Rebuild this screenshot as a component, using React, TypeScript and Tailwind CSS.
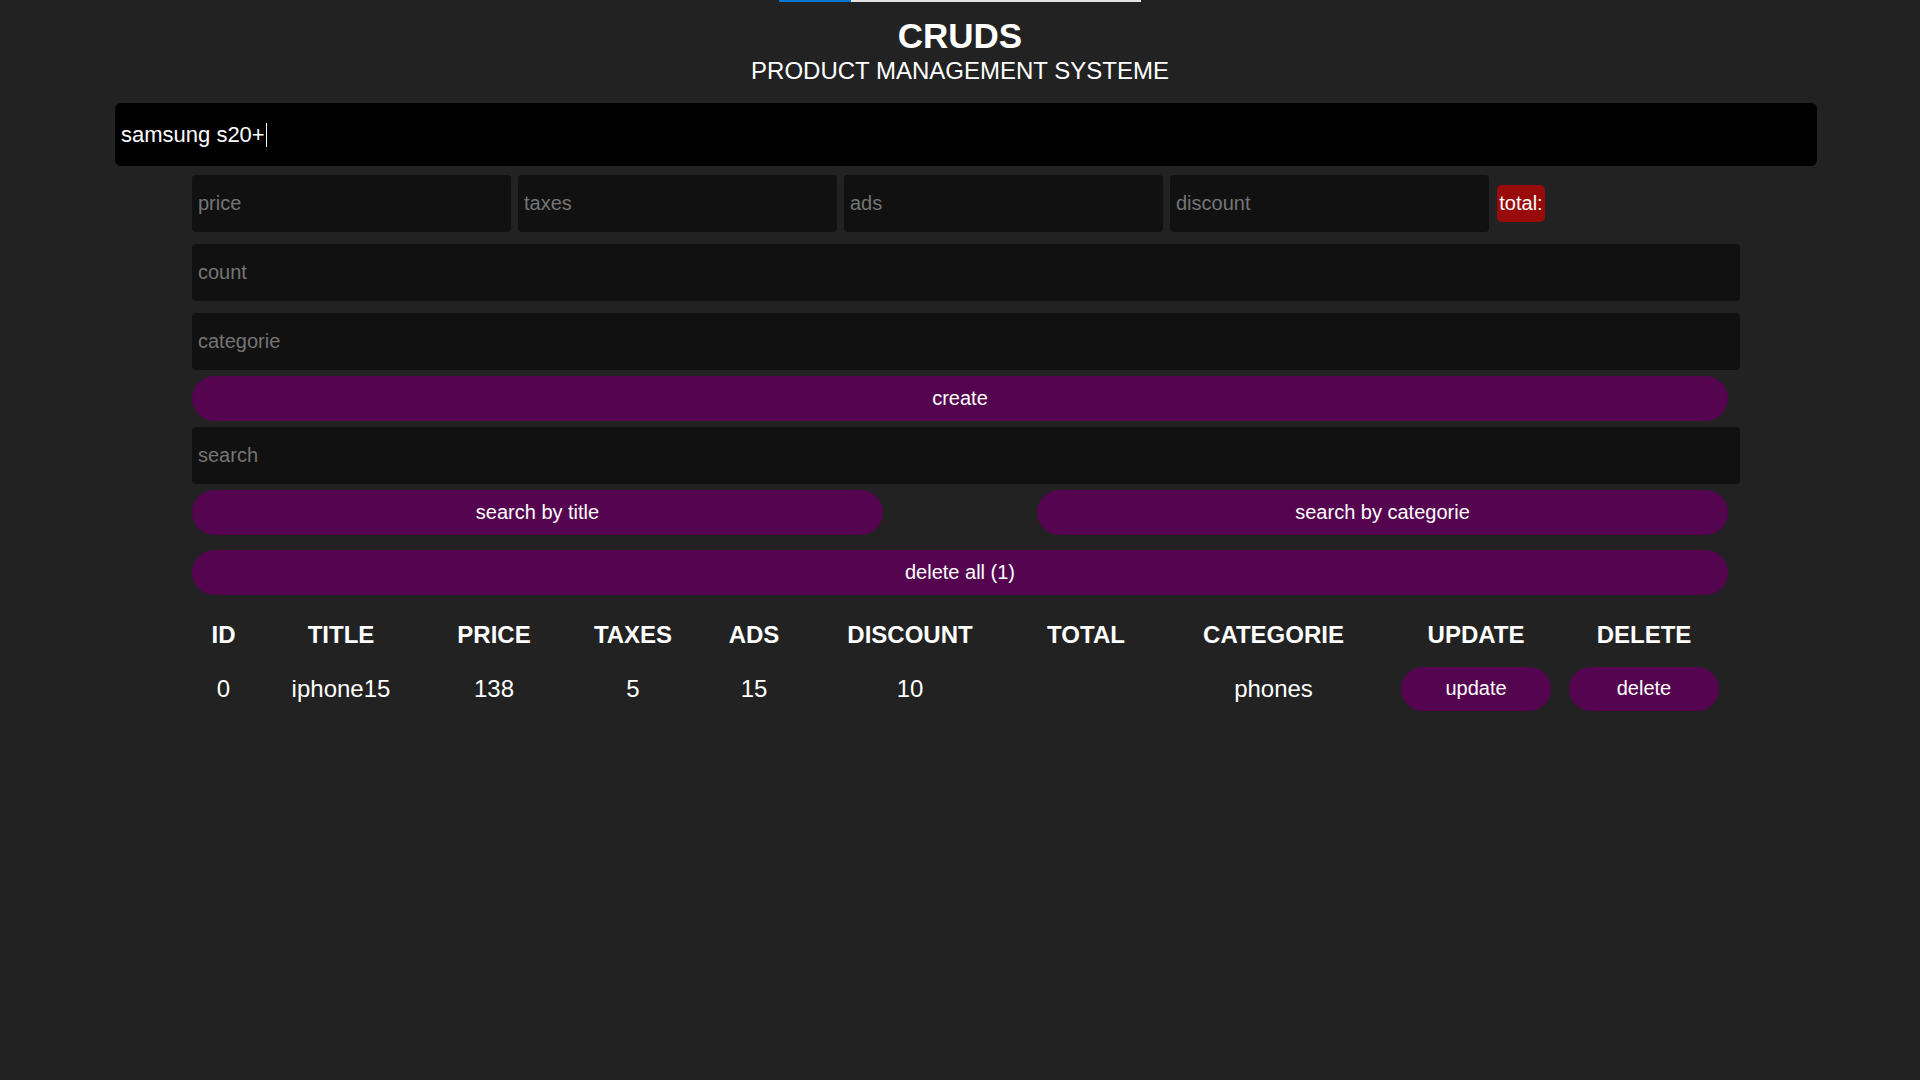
import React from "react";

const cols = [63, 172, 134, 144, 98, 214, 138, 237, 168, 168];
const heads = ["ID", "TITLE", "PRICE", "TAXES", "ADS", "DISCOUNT", "TOTAL", "CATEGORIE", "UPDATE", "DELETE"];

export default function App() {
  return (
    <div className="min-h-screen w-full bg-[#222222] text-white font-['Liberation_Sans',Arial,sans-serif]">
      <div className="mx-auto flex h-[2px] w-[362px]">
        <div className="h-full w-[72px] bg-[#0078d4]" />
        <div className="h-full flex-1 bg-[#e4e4e4]" />
      </div>
      <div className="mt-[14px] flex flex-col items-center">
        <h1 className="text-[35px] font-bold leading-[40px]">CRUDS</h1>
        <p className="mt-[1px] text-[24px] leading-[28px]">PRODUCT MANAGEMENT SYSTEME</p>
      </div>
      <div className="ml-[115px] mt-[18px] flex h-[63px] w-[1702px] items-center rounded-[6px] bg-black pl-[6px] text-[22px]">
        <span>samsung s20+</span>
        <span className="ml-[1px] inline-block h-[24px] w-px bg-white" />
      </div>
      <div className="ml-[192px] w-[1536px]">
        <div className="mt-[9px] flex items-center gap-[7px]">
          {["price", "taxes", "ads", "discount"].map((p) => (
            <input
              key={p}
              placeholder={p}
              className="h-[57px] w-[319px] rounded-[4px] bg-[#111111] px-[6px] text-[20px] text-white outline-none placeholder:text-[#757575]"
            />
          ))}
          <div className="ml-px flex h-[37px] w-[48px] items-center justify-center rounded-[5px] bg-[#990b0b] pb-[2px] text-[20px]">
            total:
          </div>
        </div>
        <input
          placeholder="count"
          className="mt-[12px] block h-[57px] w-[1548px] rounded-[4px] bg-[#111111] px-[6px] text-[20px] text-white outline-none placeholder:text-[#757575]"
        />
        <input
          placeholder="categorie"
          className="mt-[12px] block h-[57px] w-[1548px] rounded-[4px] bg-[#111111] px-[6px] text-[20px] text-white outline-none placeholder:text-[#757575]"
        />
        <button className="mt-[6px] block h-[45px] w-full rounded-full bg-[#55054f] pb-[2px] text-[20px] text-white">create</button>
        <input
          placeholder="search"
          className="mt-[6px] block h-[57px] w-[1548px] rounded-[4px] bg-[#111111] px-[6px] text-[20px] text-white outline-none placeholder:text-[#757575]"
        />
        <div className="mt-[6px] flex justify-between">
          <button className="h-[45px] w-[691px] rounded-full bg-[#55054f] pb-[2px] text-[20px] text-white">search by title</button>
          <button className="h-[45px] w-[691px] rounded-full bg-[#55054f] pb-[2px] text-[20px] text-white">search by categorie</button>
        </div>
        <button className="mt-[15px] block h-[45px] w-full rounded-full bg-[#55054f] pb-[2px] text-[20px] text-white">delete all (1)</button>
        <table className="mt-[15px] w-full table-fixed border-collapse text-center text-[24px]">
          <colgroup>
            {cols.map((w, i) => (
              <col key={i} style={{ width: w }} />
            ))}
          </colgroup>
          <thead>
            <tr className="h-[50px]">
              {heads.map((h) => (
                <th key={h} className="p-0 font-bold">
                  {h}
                </th>
              ))}
            </tr>
          </thead>
          <tbody>
            <tr className="h-[57px]">
              <td>0</td>
              <td>iphone15</td>
              <td>138</td>
              <td>5</td>
              <td>15</td>
              <td>10</td>
              <td></td>
              <td>phones</td>
              <td className="px-[9px]">
                <button className="h-[44px] w-full rounded-full bg-[#55054f] pb-[2px] text-[20px] text-white">update</button>
              </td>
              <td className="px-[9px]">
                <button className="h-[44px] w-full rounded-full bg-[#55054f] pb-[2px] text-[20px] text-white">delete</button>
              </td>
            </tr>
          </tbody>
        </table>
      </div>
    </div>
  );
}
